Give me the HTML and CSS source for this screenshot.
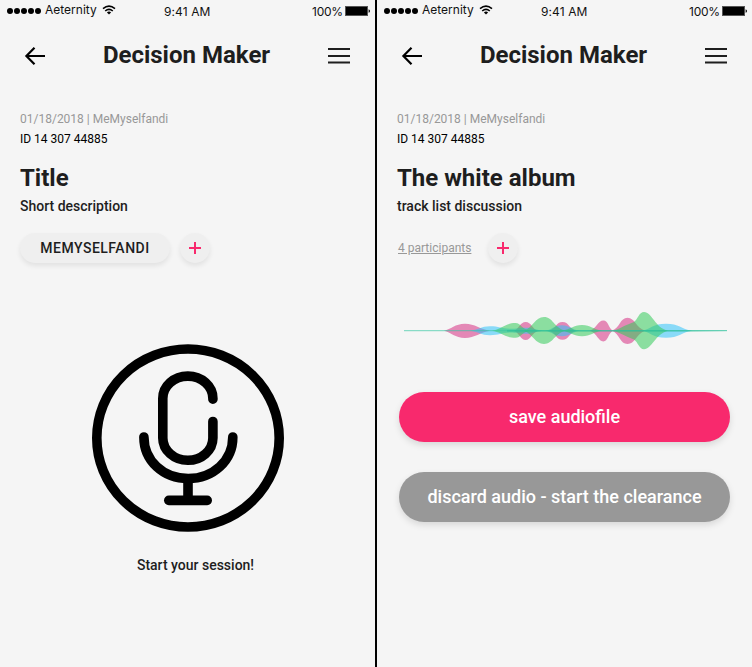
FILE: index.html
```html
<!DOCTYPE html>
<html lang="en">
<head>
<meta charset="utf-8">
<title>Decision Maker</title>
<link rel="stylesheet" href="styles.css">
</head>
<body>
<svg class="defs" width="0" height="0" aria-hidden="true">
  <symbol id="signal" viewBox="0 0 36 8"><g fill="#000"><circle cx="3" cy="4" r="3"/><circle cx="10" cy="4" r="3"/><circle cx="17" cy="4" r="3"/><circle cx="24" cy="4" r="3"/><circle cx="31" cy="4" r="3"/></g></symbol>
  <symbol id="wifi" viewBox="0 0 14 10"><path d="M1 3.7Q7-1.3 13 3.7M3.2 6Q7 2.7 10.8 6" fill="none" stroke="#000" stroke-width="1.6"/><path d="M4.9 7.4Q7 5.7 9.1 7.4L7 9.5Z"/></symbol>
  <symbol id="battery" viewBox="0 0 26 10"><rect x=".5" y=".5" width="22" height="9" fill="#000" stroke="#555"/><path d="M23.6 3.2Q25 3.6 25 5T23.6 6.8Z"/></symbol>
  <symbol id="back" viewBox="0 0 22 18"><path d="M21 9H2.6M10.5 .8 2.4 9 10.5 17.2" fill="none" stroke="#000" stroke-width="2.2"/></symbol>
  <symbol id="menu" viewBox="0 0 22 16"><path d="M0 1.1H22M0 7.9H22M0 14.6H22" stroke="#1e1e1e" stroke-width="2"/></symbol>
  <symbol id="plus" viewBox="0 0 12 12"><path d="M0 6H12M6 0V12" stroke="#f8296d" stroke-width="2"/></symbol>
</svg>
<main class="screens">
  <section class="phone">
    <div class="status">
      <svg class="signal"><use href="#signal"/></svg><span class="carrier">Aeternity</span><svg class="wifi"><use href="#wifi"/></svg>
      <span class="time">9:41 AM</span>
      <span class="level">100%</span><svg class="battery"><use href="#battery"/></svg>
    </div>
    <header class="bar">
      <svg class="back"><use href="#back"/></svg>
      <h1>Decision Maker</h1>
      <svg class="menu"><use href="#menu"/></svg>
    </header>
    <div class="info">
      <p class="meta">01/18/2018 | MeMyselfandi</p>
      <p class="ident">ID 14 307 44885</p>
      <h2>Title</h2>
      <p class="desc">Short description</p>
      <div class="people">
        <span class="chip">MEMYSELFANDI</span>
        <button class="add"><svg><use href="#plus"/></svg></button>
      </div>
    </div>
    <div class="record">
      <svg class="mic" viewBox="91 344 194 189">
        <g fill="none" stroke="#000" stroke-width="9.6" stroke-linecap="round">
          <ellipse cx="188" cy="438" rx="91.2" ry="89"/>
          <path d="M212.9 399.2V398.5A25 22.4 0 0 0 187.8 376.1A25 22.4 0 0 0 162.8 398.5V438A25 22.4 0 0 0 187.8 460.3A25 22.4 0 0 0 212.9 438V421.5"/>
          <path d="M143.9 437C143.9 461 163.5 478.6 188.2 478.6S232.8 461 232.8 437"/>
          <path d="M168.8 500.4H207.2"/>
          <path d="M188 480V499" stroke-linecap="butt"/>
        </g>
      </svg>
      <p class="caption">Start your session!</p>
    </div>
  </section>
  <section class="phone">
    <div class="status">
      <svg class="signal"><use href="#signal"/></svg><span class="carrier">Aeternity</span><svg class="wifi"><use href="#wifi"/></svg>
      <span class="time">9:41 AM</span>
      <span class="level">100%</span><svg class="battery"><use href="#battery"/></svg>
    </div>
    <header class="bar">
      <svg class="back"><use href="#back"/></svg>
      <h1>Decision Maker</h1>
      <svg class="menu"><use href="#menu"/></svg>
    </header>
    <div class="info">
      <p class="meta">01/18/2018 | MeMyselfandi</p>
      <p class="ident">ID 14 307 44885</p>
      <h2>The white album</h2>
      <p class="desc">track list discussion</p>
      <div class="people">
        <a class="count">4 participants</a>
        <button class="add"><svg><use href="#plus"/></svg></button>
      </div>
    </div>
    <div class="audio">
      <svg class="wave" viewBox="400 308 330 46">
        <g fill="#d52d81" fill-opacity=".55">
          <path d="M444 330.7C451 329.5 455 323.8 465 323.8S480 329.5 490 330.7C480 332 475 338 465 338S451 332 444 330.7Z"/>
          <path d="M514 330.7C519 329 520 321.9 525.7 321.9S532 329 538 330.7C532 332.5 531 339.9 525.7 339.9S519 332.5 514 330.7Z"/>
          <path d="M549 330.7C556 329 556 322 562.5 322S569 329 576 330.7C569 332.5 569 339.8 562.5 339.8S556 332.5 549 330.7Z"/>
          <path d="M590 330.7C597 328 598 320.5 603.3 320.5S608 328 613 330.7C608 333.5 608 341.4 603.3 341.4S597 333.5 590 330.7Z"/>
          <path d="M612 330.7C620 328 620 317.8 627.5 317.8S636 328 645 330.7C636 334 635 344 627.5 344S620 334 612 330.7Z"/>
        </g>
        <g fill="#30c3f9" fill-opacity=".55">
          <path d="M470 330.7C478 330 481 326.3 490 326.3S501 328.5 510 328.8C517 328.8 519 327.7 526 327.7S535 330 545 330.7C535 331.5 533 333.7 526 333.7S516 332.4 510 332.5C501 332.7 499 335.2 490 335.2S478 331.5 470 330.7Z"/>
          <path d="M545 330.7C553 329.5 554 325.2 562 325.2S571 329.5 580 330.7C571 332 570 336.2 562 336.2S553 332 545 330.7Z"/>
          <path d="M642 330.7C651 329 653 323.7 666 323.7S681 329 692 330.7C681 332.5 679 337.8 666 337.8S651 332.5 642 330.7Z"/>
        </g>
        <g fill="#33ca59" fill-opacity=".55">
          <path d="M492 330.7C501 329.5 505 323.1 515.5 323.1C521 323.1 521 329 530 330.7C521 332.5 521 337.8 515.5 337.8C505 337.8 501 332 492 330.7Z"/>
          <path d="M524 330.7C533 328 535 317.1 544 317.1S554 328 565 330.7C554 334 553 343.9 544 343.9S533 334 524 330.7Z"/>
          <path d="M562 330.7C571 329.5 573 325 582 325S593 329.5 602 330.7C593 332 591 336.2 582 336.2S571 332 562 330.7Z"/>
          <path d="M613 330.7C620 329 625 325 634 322C638 319 639 312 644 312C652 312 655 328 668 330.7C655 334 652 349.2 644 349.2C639 349.2 638 342 634 339.5C625 336 620 332.5 613 330.7Z"/>
        </g>
        <path d="M404 330.7H727" stroke="#35c8a2" stroke-opacity=".7"/>
        <path d="M507 330.3H690L727 330.6V331L690 331.5H507Z" fill="#23bb92" fill-opacity=".6"/>
      </svg>
      <button class="action save">save audiofile</button>
      <button class="action discard">discard audio - start the clearance</button>
    </div>
  </section>
</main>
</body>
</html>
```
FILE: styles.css
```css
* { box-sizing: border-box; }
body { margin: 0; background: #f5f5f5; color: #1e1e1e; font-family: Roboto, "Liberation Sans", sans-serif; }
h1, h2, p { margin: 0; }
button { border: 0; padding: 0; font-family: inherit; }
svg { display: block; flex: none; }
.defs { display: none; }
.screens { display: grid; grid-template-columns: 375px 375px; column-gap: 2px; width: 752px; height: 667px; overflow: hidden; background: #000; }
.phone { background: #f5f5f5; }
.status { display: flex; height: 22px; padding-left: 7px; font: 12px/14px Inter, sans-serif; color: #111; white-space: nowrap; }
.signal { width: 36px; height: 8px; margin-top: 7px; }
.carrier { width: 59px; padding: 3px 0 0 2px; }
.wifi { width: 14px; height: 10px; margin-top: 5px; }
.time { width: 145px; margin-left: 48px; padding-top: 5px; letter-spacing: .1px; }
.level { width: 36px; margin-left: 3px; padding-top: 5px; letter-spacing: -.25px; }
.battery { width: 26px; height: 10px; margin: 6px 0 0 -3px; }
.bar { display: flex; align-items: center; height: 66px; padding: 0 25px 0 24px; justify-content: space-between; }
.back { width: 22px; height: 18px; margin-top: 2px; }
h1 { margin-right: 1px; font-size: 24px; line-height: 28px; font-weight: 700; }
.menu { width: 22px; height: 16px; margin-top: 2px; }
.info { height: 176px; padding: 24px 20px 0; }
.meta, .ident { font-size: 12px; line-height: 14px; }
.meta { color: #989898; }
.ident { margin-top: 6px; color: #000; }
h2 { margin-top: 18px; font-size: 24px; line-height: 28px; font-weight: 700; }
.desc { margin-top: 6px; font-size: 14px; line-height: 16px; font-weight: 500; }
.people { display: flex; gap: 10px; margin-top: 19px; height: 30px; }
.chip { width: 150px; border-radius: 15px; background: #efefef; box-shadow: 0 3px 5px rgba(0,0,0,.08); font-size: 14px; line-height: 30px; font-weight: 500; letter-spacing: .5px; text-align: center; }
.add { display: grid; place-items: center; width: 30px; height: 30px; border-radius: 50%; background: #efefef; box-shadow: 0 3px 5px rgba(0,0,0,.08); }
.add svg { width: 12px; height: 12px; }
.count { width: 80px; margin-left: 1px; font-size: 12px; line-height: 30px; color: #989898; text-decoration: underline; }
.record { padding-top: 80px; }
.mic { width: 194px; height: 189px; margin-left: 91px; }
.caption { padding: 24px 0 0 16px; font-size: 14px; line-height: 16px; font-weight: 500; text-align: center; }
.audio { padding: 44px 22px 0; }
.wave { width: 330px; height: 46px; margin-left: 1px; }
.action { display: block; width: 331px; height: 50px; border-radius: 25px; color: #fff; font-size: 18px; line-height: 50px; font-weight: 500; box-shadow: 0 3px 7px rgba(0,0,0,.12); white-space: nowrap; }
.save { margin-top: 38px; background: #f8296d; }
.discard { margin-top: 30px; background: #989898; }
```
